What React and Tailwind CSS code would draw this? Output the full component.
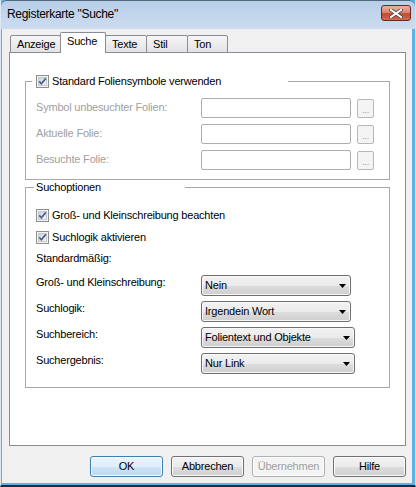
import { useState } from "react";

const btnGrad =
    "bg-[linear-gradient(to_bottom,#f2f2f2_0%,#ebebeb_50%,#dddddd_51%,#cfcfcf_100%)]";

function Check({ checked = true }) {
    return (
        <svg width="13" height="13" viewBox="0 0 13 13" className="shrink-0">
            <defs>
                <linearGradient id="cbg" x1="0" y1="0" x2="1" y2="1">
                    <stop offset="0" stopColor="#cdd1d7" />
                    <stop offset="1" stopColor="#f7f7f7" />
                </linearGradient>
            </defs>
            <rect x="0.5" y="0.5" width="12" height="12" fill="#f4f4f4" stroke="#8e8f8f" />
            <rect x="2.5" y="2.5" width="8" height="8" fill="url(#cbg)" stroke="#c5c8cc" />
            {checked && (
                <path
                    d="M3.2 6.4 L5.4 8.8 L9.8 3.4"
                    stroke="#4b5f96"
                    strokeWidth="1.7"
                    fill="none"
                />
            )}
        </svg>
    );
}

function Select({ value, wide }) {
    return (
        <div
            className={`${wide ? "w-[154px]" : "w-[150px]"} h-[21px] flex items-center justify-between pl-[3px] pr-[4px] border border-[#707070] rounded-[3px] ${btnGrad} shadow-[inset_0_0_0_1px_#f8f8f8]`}
        >
            <span>{value}</span>
            <svg width="7" height="4" viewBox="0 0 7 4">
                <polygon points="0,0 7,0 3.5,4" fill="#000" />
            </svg>
        </div>
    );
}

function PathRow({ label }) {
    return (
        <div className="flex items-start h-[20px]">
            <div className="w-[165px] pt-[3px] text-[#a0a0a0]">{label}</div>
            <div className="w-[150px] h-[20px] border border-[#adadad] rounded-[2px] bg-white" />
            <div className="ml-[6px] mt-[1px] w-[17px] h-[19px] border border-[#b5b8bb] rounded-[2px] bg-[#f4f4f4] flex items-center justify-center text-[9px] text-[#9a9a9a] pt-[4px]">
                ...
            </div>
        </div>
    );
}

function SelectRow({ label, value, wide }) {
    return (
        <div className="flex items-start">
            <div className="w-[165px] pt-[1px]">{label}</div>
            <Select value={value} wide={wide} />
        </div>
    );
}

function Button({ children, primary, disabled }) {
    const look = primary
        ? "border-[#3c7fb1] bg-[linear-gradient(to_bottom,#eaf4fc_0%,#dfeefa_50%,#cfe4f6_51%,#bcd8f0_100%)]"
        : disabled
        ? "border-[#adb2b5] bg-[#f4f4f4] text-[#a0a0a0]"
        : `border-[#707070] ${btnGrad}`;
    return (
        <div
            className={`w-[73px] h-[21px] border rounded-[3px] flex items-center justify-center shadow-[inset_0_0_0_1px_#fbfbfb] ${look}`}
        >
            {children}
        </div>
    );
}

export default function App() {
    const [tab] = useState("Suche");
    const tabs = [
        ["Anzeige", "w-[51px]"],
        ["Suche", "w-[46px] -ml-px"],
        ["Texte", "w-[42px] -ml-px"],
        ["Stil", "w-[42px] -ml-px"],
        ["Ton", "w-[41px] -ml-px"],
    ];

    return (
        <div className="w-[416px] h-[487px] flex flex-col bg-[#5eb1e3] border-l border-r border-l-[#dbe7f3] border-r-[#cfe3f3] border-b-2 border-b-[#1e2b3c] font-['Liberation_Sans',Arial,sans-serif] text-[11px] leading-[13px] tracking-[-0.2px] text-black">
            {/* title bar */}
            <div className="h-[29px] shrink-0 flex items-start justify-between border-t border-t-[#52667c] rounded-t-[6px] bg-gradient-to-b from-[#b7cfe9] to-[#cddcef]">
                <div className="pl-[6px] pt-[6px] text-[12px] leading-[15px] tracking-[-0.3px]">
                    Registerkarte "Suche"
                </div>
                <div className="mt-[4px] mr-[4px] w-[30px] h-[16px] rounded-[3px] border border-[#6b2a20] bg-[linear-gradient(to_bottom,#eab1a4_0%,#d98874_45%,#c4492f_55%,#d16a4f_100%)] flex items-center justify-center">
                    <svg width="14" height="9" viewBox="0 0 14 9">
                        <path d="M2 1 L12 8 M12 1 L2 8" stroke="#4a4a4a" strokeWidth="3.6" strokeLinecap="square" />
                        <path d="M2 1 L12 8 M12 1 L2 8" stroke="#ffffff" strokeWidth="2" strokeLinecap="square" />
                    </svg>
                </div>
            </div>

            {/* body */}
            <div className="flex-1 ml-[1px] mr-[3px] mb-[2px] bg-[#f0f0f0] flex flex-col">
                <div className="relative z-10 mt-[3px] -mb-px h-[21px] pl-[8px] flex items-end">
                    {tabs.map(([name, w]) =>
                        name === tab ? (
                            <div
                                key={name}
                                className={`${w} relative z-10 h-[21px] border border-b-0 border-[#898c95] rounded-t-[2px] bg-white pl-[6px] pt-[2px]`}
                            >
                                {name}
                            </div>
                        ) : (
                            <div
                                key={name}
                                className={`${w} h-[18px] border border-[#898c95] rounded-t-[2px] bg-gradient-to-b from-[#f6f6f6] to-[#e3e3e3] pl-[6px] pt-[2px]`}
                            >
                                {name}
                            </div>
                        )
                    )}
                </div>

                <div className="ml-[7px] mr-[6px] h-[394px] border border-[#898c95] bg-white px-[15px]">
                    <fieldset className="mt-[22px] border border-[#a8a8a8] pl-[6px] pb-[9px]">
                        <legend className="w-[256px] h-[13px]">
                            <div className="flex items-center gap-[3px] pl-[4px]">
                                <Check />
                                <span>Standard Foliensymbole verwenden</span>
                            </div>
                        </legend>
                        <div className="pl-[4px] pt-[10px] flex flex-col gap-[6px]">
                            <PathRow label="Symbol unbesuchter Folien:" />
                            <PathRow label="Aktuelle Folie:" />
                            <PathRow label="Besuchte Folie:" />
                        </div>
                    </fieldset>

                    <fieldset className="mt-[1px] border border-[#a8a8a8] pl-[6px] pb-[13px]">
                        <legend className="ml-[2px] w-[151px] h-[13px] pl-[2px]">
                            Suchoptionen
                        </legend>
                        <div className="pl-[4px] pt-[15px] flex flex-col">
                            <div className="flex items-center gap-[3px] h-[13px]">
                                <Check />
                                <span>Groß- und Kleinschreibung beachten</span>
                            </div>
                            <div className="mt-[9px] flex items-center gap-[3px] h-[13px]">
                                <Check />
                                <span>Suchlogik aktivieren</span>
                            </div>
                            <div className="mt-[8px] h-[13px]">Standardmäßig:</div>
                            <div className="mt-[10px] flex flex-col gap-[5px]">
                                <SelectRow label="Groß- und Kleinschreibung:" value="Nein" />
                                <SelectRow label="Suchlogik:" value="Irgendein Wort" />
                                <SelectRow label="Suchbereich:" value="Folientext und Objekte" wide />
                                <SelectRow label="Suchergebnis:" value="Nur Link" wide />
                            </div>
                        </div>
                    </fieldset>
                </div>

                <div className="mt-[10px] mr-[6px] flex justify-end gap-[8px]">
                    <Button primary>OK</Button>
                    <Button>Abbrechen</Button>
                    <Button disabled>Übernehmen</Button>
                    <Button>Hilfe</Button>
                </div>
            </div>
        </div>
    );
}
